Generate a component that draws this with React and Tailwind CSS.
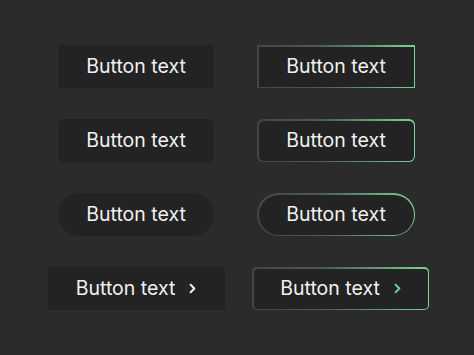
import React from 'react';

const font = { fontFamily: 'Inter, "Noto Sans", sans-serif' };

function Chevron({ className }) {
  return (
    <svg className={className} width="15" height="15" viewBox="0 0 24 24" fill="none" stroke="currentColor" strokeWidth={3.2} strokeLinecap="round" strokeLinejoin="round">
      <path d="m9 18 6-6-6-6" />
    </svg>
  );
}

// Solid dark button
function SolidButton({ shape, withArrow }) {
  return (
    <button
      className={`flex items-center justify-center h-[43px] bg-[#232323] text-[#f1f1f1] text-[19.5px] ${shape} ${
        withArrow ? 'w-[177px] gap-[10px] pl-[4px]' : 'w-[156px]'
      }`}
    >
      Button text
      {withArrow && <Chevron className="text-[#f1f1f1]" />}
    </button>
  );
}

// Gradient-outlined button
function OutlineButton({ outer, inner, withArrow }) {
  return (
    <div
      className={`p-[1.5px] bg-gradient-to-r from-[#454545] via-[#4b5d50] via-40% to-[#78d699] ${outer} ${
        withArrow ? 'w-[177px] ml-[9px]' : 'w-[158px]'
      }`}
    >
      <button
        className={`flex w-full items-center justify-center h-[40px] bg-[#232323] text-[#f1f1f1] text-[19.5px] ${inner} ${
          withArrow ? 'gap-[10px] pl-[4px]' : ''
        }`}
      >
        Button text
        {withArrow && <Chevron className="text-[#6fcf92]" />}
      </button>
    </div>
  );
}

export default function App() {
  return (
    <div className="w-[474px] h-[355px] bg-[#2b2b2b] pt-[45px] pl-[36px]" style={font}>
      <div className="grid grid-cols-[200px_200px] gap-y-[31px] justify-items-center">
        <SolidButton shape="rounded-[1px]" />
        <OutlineButton outer="rounded-[1px]" inner="rounded-none" />

        <SolidButton shape="rounded-[5px]" />
        <OutlineButton outer="rounded-[6px]" inner="rounded-[5px]" />

        <SolidButton shape="rounded-full" />
        <OutlineButton outer="rounded-full" inner="rounded-full" />

        <SolidButton shape="rounded-[3px]" withArrow />
        <OutlineButton outer="rounded-[5px]" inner="rounded-[4px]" withArrow />
      </div>
    </div>
  );
}
